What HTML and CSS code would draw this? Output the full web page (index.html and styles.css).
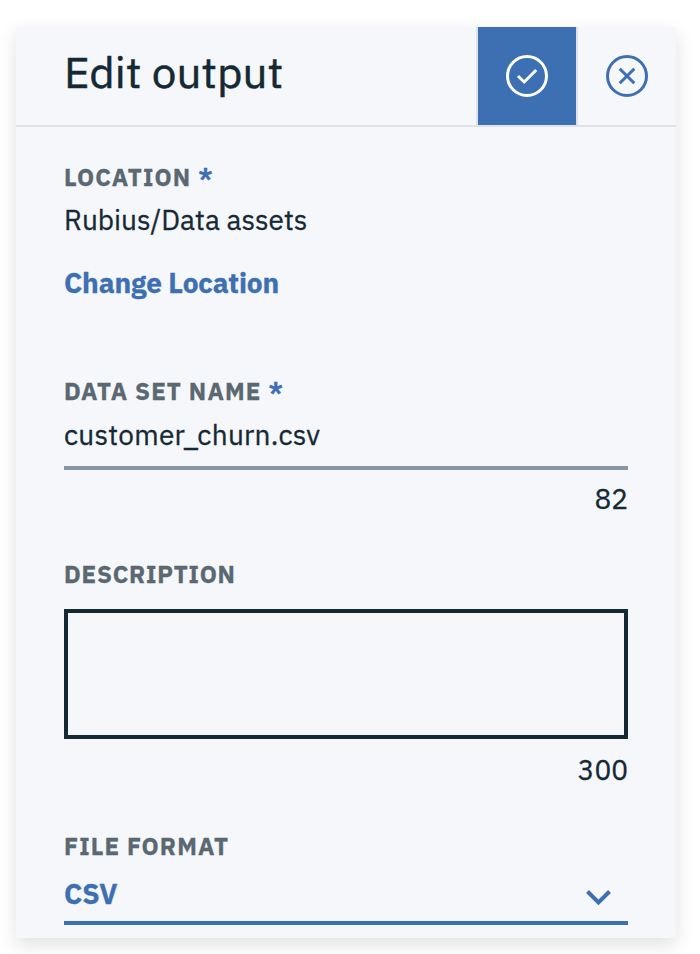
FILE: index.html
```html
<!DOCTYPE html>
<html lang="en">
<head>
<meta charset="utf-8">
<title>Edit output</title>
<link rel="stylesheet" href="styles.css">
</head>
<body>
<main class="panel">
  <header class="header">
    <h1 class="title">Edit output</h1>
    <button class="action save" aria-label="Save">
      <svg width="42" height="42" viewBox="0 0 42 42" fill="none" stroke="currentColor" stroke-width="3"><circle cx="21" cy="21" r="19.5"/><path d="M12 21l6.2 6L30.2 15"/></svg>
    </button>
    <button class="action cancel" aria-label="Cancel">
      <svg width="42" height="42" viewBox="0 0 42 42" fill="none" stroke="currentColor" stroke-width="3"><circle cx="21" cy="21" r="19.5"/><path d="M13.7 13.7l14.6 14.6M28.3 13.7L13.7 28.3"/></svg>
    </button>
  </header>
  <div class="form">
    <section class="location">
      <div class="label"><span>LOCATION</span><span class="star">*</span></div>
      <div class="value path">Rubius/Data assets</div>
      <a class="link">Change Location</a>
    </section>
    <section class="name">
      <div class="label"><span>DATA SET NAME</span><span class="star">*</span></div>
      <div class="value filename">customer_churn.csv</div>
      <div class="count">82</div>
    </section>
    <section class="description">
      <div class="label">DESCRIPTION</div>
      <div class="textarea"></div>
      <div class="count">300</div>
    </section>
    <section class="format">
      <div class="label">FILE FORMAT</div>
      <div class="select"><span>CSV</span>
        <svg width="26" height="16" viewBox="0 0 26 16" fill="none" stroke="currentColor" stroke-width="4"><path d="M1.5 1.5l11 11 11-11"/></svg>
      </div>
    </section>
  </div>
</main>
</body>
</html>
```

FILE: styles.css
```css
* { box-sizing: border-box; }
body {
  margin: 0;
  padding: 27px 24px 16px 16px;
  background: #fff;
  color: #152935;
  font-family: "IBM Plex Sans", Roboto, sans-serif;
}
.panel {
  width: 660px;
  height: 911px;
  background: #f5f7fb;
  box-shadow: 0 7px 18px rgba(0, 0, 0, 0.12);
}
.header {
  display: flex;
  height: 100px;
  border-bottom: 2px solid #dfe3e6;
}
.title {
  flex: 1;
  margin: 0;
  padding-left: 48px;
  font-size: 44px;
  font-weight: 400;
  line-height: 90px;
  letter-spacing: 0.05px;
  white-space: nowrap;
  -webkit-text-stroke: 0.5px currentColor;
}
.action {
  display: flex;
  align-items: center;
  justify-content: center;
  height: 98px;
  padding: 0;
  border: 0 solid #dfe3e6;
  color: #3d70b2;
  background: none;
}
.save { width: 102px; border-width: 0 2px; background: #3d70b2; color: #fff; }
.cancel { width: 98px; }
.form { padding: 36px 48px 0; }
.label {
  display: flex;
  color: #5a6872;
  font-size: 24px;
  font-weight: 700;
  line-height: 28px;
  letter-spacing: 1.15px;
  white-space: nowrap;
  -webkit-text-stroke: 0.3px currentColor;
}
.star { margin-left: 7px; color: #3d70b2; }
.value, .link, .count, .select {
  font-size: 28px;
  line-height: 36px;
  white-space: nowrap;
  -webkit-text-stroke: 0.3px currentColor;
}
.path { margin-top: 11px; }
.link {
  display: block;
  margin-top: 27px;
  color: #3d70b2;
  font-weight: 700;
  letter-spacing: -0.13px;
}
.name { margin-top: 76px; }
.filename {
  margin-top: 12px;
  padding-bottom: 13px;
  border-bottom: 4px solid #8897a2;
  letter-spacing: 0.28px;
}
.name .count { margin-top: 11px; }
.count { text-align: right; }
.description { margin-top: 43px; }
.description .label { letter-spacing: 0.8px; }
.textarea { height: 130px; margin-top: 21px; border: 4px solid #152935; }
.description .count { margin-top: 13px; }
.format { margin-top: 44px; }
.select {
  display: flex;
  justify-content: space-between;
  margin-top: 16px;
  padding: 0 16px 9px 0;
  border-bottom: 4px solid #3d70b2;
  color: #3d70b2;
  font-weight: 700;
}
.select svg { margin-top: 14px; }
```
